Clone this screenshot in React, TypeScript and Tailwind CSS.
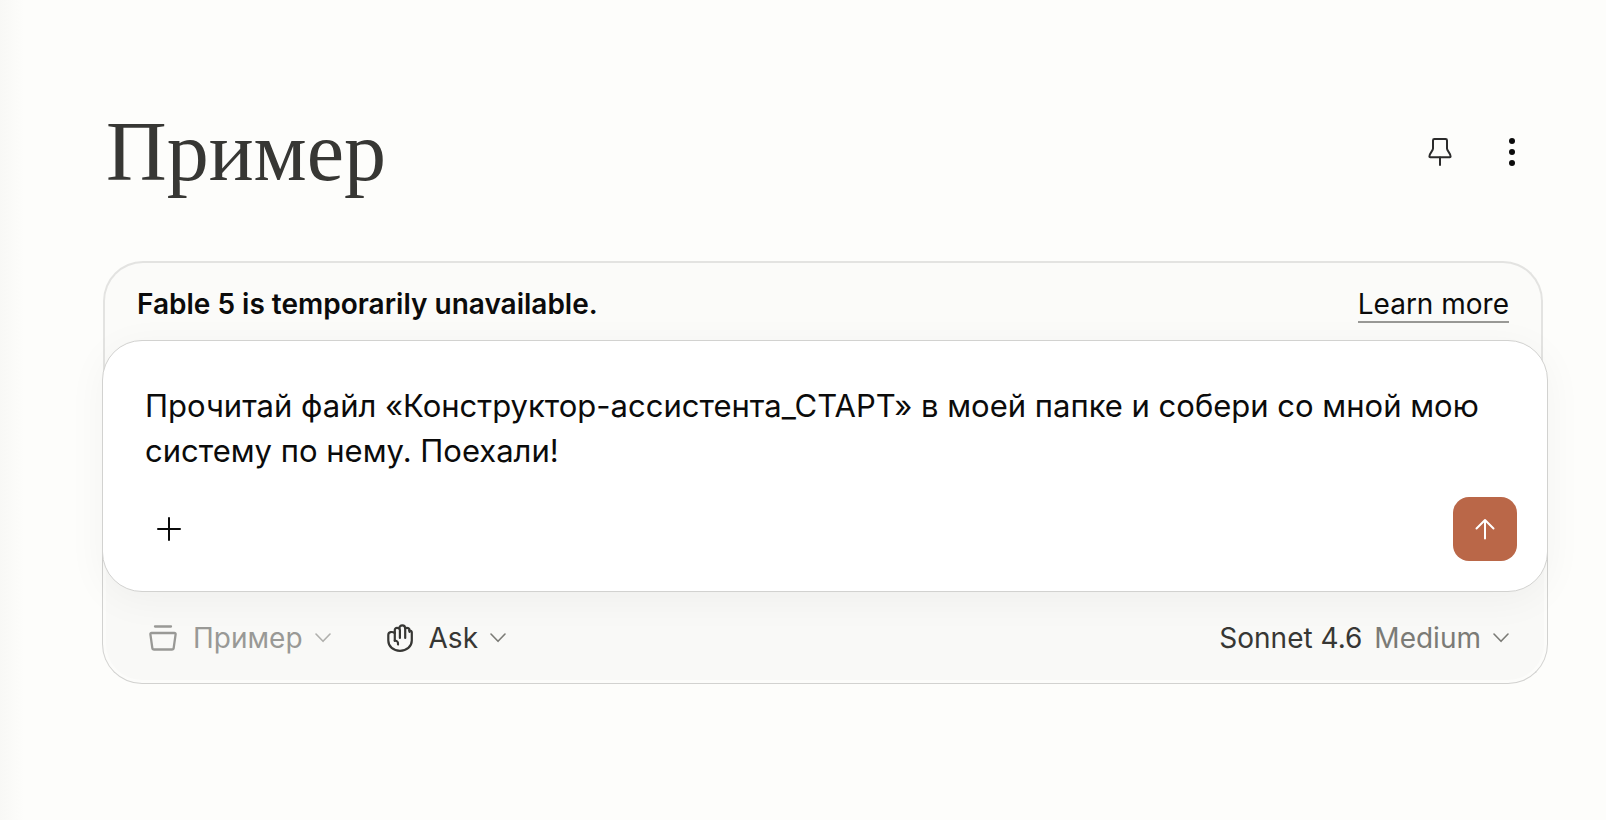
import { useState } from "react";

const ChevronIcon = ({ className }: { className?: string }) => (
  <svg className={className} width="16" height="10" viewBox="0 0 16 10" fill="none" aria-hidden="true">
    <path d="M1 1l7 7.3L15 1" stroke="currentColor" strokeWidth="1.6" strokeLinecap="round" strokeLinejoin="round" />
  </svg>
);

const PinIcon = () => (
  <svg width="24" height="28" viewBox="0 0 24 28" fill="none" stroke="currentColor" strokeWidth="2" strokeLinejoin="round" aria-hidden="true">
    <path d="M6.400 1h11.200a1.400 1.400 0 0 1 1.400 1.400V10.500c0 2.500 3.600 4.600 3.600 8 0 .5-.3.800-.8.800H2.200c-.5 0-.8-.3-.8-.8 0-3.400 3.600-5.500 3.600-8V2.400A1.400 1.400 0 0 1 6.400 1z" />
    <path d="M12 19.500V27" strokeLinecap="round" />
  </svg>
);

const ProjectIcon = () => (
  <svg width="28" height="26" viewBox="0 0 28 26" fill="none" stroke="currentColor" strokeWidth="2.3" strokeLinecap="round" strokeLinejoin="round" aria-hidden="true">
    <path d="M6 1.500h16" />
    <path d="M2.600 8h22.800c.8 0 1.300.6 1.200 1.300l-1.900 13.500c-.1.900-.9 1.700-1.900 1.700H5.200c-1 0-1.800-.8-1.900-1.700L1.400 9.300C1.300 8.600 1.800 8 2.600 8z" />
  </svg>
);

const HandIcon = () => (
  <svg width="26" height="28" viewBox="0 0 26 28" fill="none" stroke="currentColor" strokeWidth="2.2" strokeLinecap="round" strokeLinejoin="round" aria-hidden="true">
    <path d="M7.800 17V6c0-1.300.9-2.200 2.200-2.200s2.900.9 2.900 2.200v8" />
    <path d="M12.300 4.500C12.300 2.500 13.500 1.300 15.300 1.300s2.900 1.200 2.900 3.200V14" />
    <path d="M18.200 4.200c2.800-1 4.400.300 4.400 2.500V8" />
    <path d="M7.800 9C5.400 7.400 1.300 7.600 1.300 11v5.500C1.300 22.600 6.400 26.800 13 26.800s11.800-4.200 11.800-10.300V8.500c0-1.500-1.200-2.200-2.600-1.900" />
    <path d="M7.800 16.500c2.300.2 3.500 1.400 3.200 4" />
  </svg>
);

const App = () => {
  const [message, setMessage] = useState(
    "Прочитай файл «Конструктор-ассистента_СТАРТ» в моей папке и собери со мной мою систему по нему. Поехали!"
  );

  return (
    <div className="min-h-screen bg-[#fdfdfb] bg-linear-to-r from-[#f8f8f6] to-[#fdfdfb] to-[24px] font-['Inter',sans-serif] text-[#0b0b0b]">
      <main className="pt-28 pr-[58px] pb-16 pl-[102px]">
        {/* Title row */}
        <header className="flex items-center justify-between pr-1 pl-1">
          <h1 className="font-['Liberation_Serif',serif] text-[84px] leading-[80px] text-[#373734]">Пример</h1>
          <div className="flex items-center gap-2">
            <button type="button" aria-label="Pin" className="flex size-16 items-center justify-center text-[#2b2b2b]">
              <PinIcon />
            </button>
            <button type="button" aria-label="More options" className="flex size-16 items-center justify-center">
              <svg width="6" height="28" viewBox="0 0 6 28" fill="currentColor" aria-hidden="true">
                <circle cx="3" cy="3" r="3" />
                <circle cx="3" cy="14" r="3" />
                <circle cx="3" cy="25" r="3" />
              </svg>
            </button>
          </div>
        </header>

        <section className="mt-[69px]">
          {/* Notice, tucked behind the composer */}
          <div className="mr-[5px] ml-px flex justify-between rounded-t-[40px] border-2 border-b-0 border-[#e3e3e1] bg-[#fbfbf9] px-8 pt-6 pb-[68px] text-[28px] leading-[34px]">
            <p className="font-semibold">Fable 5 is temporarily unavailable.</p>
            <a href="#" className="border-b-2 border-[#999996]">Learn more</a>
          </div>

          {/* Composer */}
          <form
            className="relative z-10 -mt-[51px] rounded-[40px] border border-[#d2d2d0] bg-white pt-[42px] pr-[30px] pb-[30px] pl-[42px] shadow-[0_8px_40px_rgba(0,0,0,0.045)]"
            onSubmit={(e) => e.preventDefault()}
          >
            <textarea
              aria-label="Message"
              rows={2}
              value={message}
              onChange={(e) => setMessage(e.target.value)}
              className="block w-full resize-none overflow-hidden text-[31px] leading-[45px] outline-none"
            />
            <div className="mt-6 flex items-center justify-between">
              <button type="button" aria-label="Add" className="flex size-12 items-center justify-center">
                <svg width="26" height="26" viewBox="0 0 26 26" stroke="currentColor" strokeWidth="2" strokeLinecap="round" aria-hidden="true">
                  <path d="M13 2v22M2 13h22" />
                </svg>
              </button>
              <button type="submit" aria-label="Send" className="flex size-16 items-center justify-center rounded-2xl bg-[#ba6748] text-white">
                <svg width="20" height="22" viewBox="0 0 20 22" fill="none" stroke="currentColor" strokeWidth="2" strokeLinecap="round" strokeLinejoin="round" aria-hidden="true">
                  <path d="M10 20.500V2M1.500 10.500L10 2l8.500 8.500" />
                </svg>
              </button>
            </div>
          </form>

          {/* Options, tucked under the composer */}
          <div className="-mt-10 flex items-center justify-between rounded-b-[40px] border border-t-0 border-[#d2d2d0] bg-[#f9f9f7] pt-[66px] pr-[38px] pb-[25px] pl-[46px] text-[28px] leading-10 shadow-[inset_0_0_0_3px_#fcfcfa]">
            <div className="flex items-center gap-14">
              <button type="button" className="flex items-center gap-3 text-[#999996]">
                <span className="mr-1">
                  <ProjectIcon />
                </span>
                <span>Пример</span>
                <ChevronIcon className="text-[#b0b0ad]" />
              </button>
              <button type="button" className="flex items-center gap-3 text-[#373734]">
                <span className="mr-1">
                  <HandIcon />
                </span>
                <span>Ask</span>
                <ChevronIcon className="text-[#7b7b76]" />
              </button>
            </div>
            <button type="button" className="flex items-center gap-3 text-[#373734]">
              <span>Sonnet 4.6</span>
              <span className="text-[#7b7b76]">Medium</span>
              <ChevronIcon className="text-[#7b7b76]" />
            </button>
          </div>
        </section>
      </main>
    </div>
  );
};

export default App;
